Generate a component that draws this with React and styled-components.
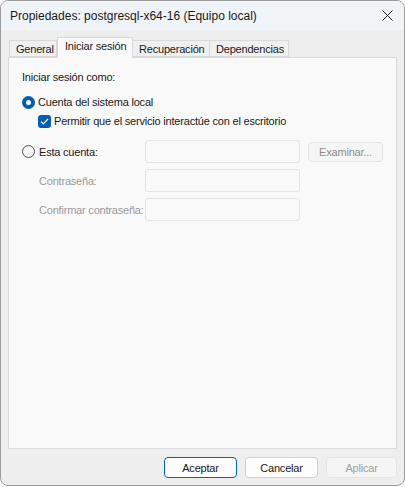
import React from 'react';
import styled, { createGlobalStyle } from 'styled-components';

const GlobalStyle = createGlobalStyle`
  html, body {
    margin: 0;
    padding: 0;
    background: #ffffff;
  }
  body {
    font-family: 'Liberation Sans', Arial, sans-serif;
    font-size: 11px;
    letter-spacing: -0.2px;
    color: #1a1a1a;
  }
`;

const Window = styled.div`
  box-sizing: border-box;
  width: 405px;
  height: 486px;
  display: flex;
  flex-direction: column;
  background: #eeeeee;
  border: 1px solid #9c9c9c;
  border-radius: 8px;
  overflow: hidden;
`;

const TitleBar = styled.div`
  height: 29px;
  flex: none;
  display: flex;
  align-items: center;
  justify-content: space-between;
  padding: 0 8px 0 9px;
  background: #eff4f9;
  font-size: 12px;
  letter-spacing: 0;
  color: #1a1a1a;
`;

const CloseButton = styled.button`
  width: 30px;
  height: 29px;
  border: 0;
  padding: 0;
  background: transparent;
  display: flex;
  align-items: center;
  justify-content: center;
  margin-right: -6px;
`;

const TabStrip = styled.div`
  display: flex;
  align-items: flex-end;
  margin: 7px 0 0 8px;
  height: 20px;
  position: relative;
  z-index: 1;
`;

const Tab = styled.div`
  box-sizing: border-box;
  height: ${p => (p.$active ? '21px' : '17px')};
  margin-bottom: ${p => (p.$active ? '-1px' : '0')};
  padding: ${p => (p.$active ? '2px 0 0 7px' : '2px 0 0 6px')};
  border: 1px solid #d9d9d9;
  border-bottom: ${p => (p.$active ? '0' : '1px solid #d9d9d9')};
  border-left: ${p => (p.$first || p.$active ? '1px solid #d9d9d9' : '0')};
  background: ${p => (p.$active ? '#f9f9f9' : '#f0f0f0')};
  width: ${p => p.$w}px;
  white-space: nowrap;
  color: #1a1a1a;
  line-height: 13px;
`;

const Panel = styled.div`
  box-sizing: border-box;
  margin: 0 7px 0 7px;
  height: 392px;
  border: 1px solid #dadada;
  background: #f9f9f9;
  padding: 11px 13px 0 13px;
  display: flex;
  flex-direction: column;
`;

const Line = styled.div`
  display: flex;
  align-items: center;
  height: 16px;
  margin-top: ${p => p.$mt || 0}px;
  margin-left: ${p => p.$ml || 0}px;
  color: ${p => (p.$disabled ? '#9a9a9a' : '#1a1a1a')};
  white-space: nowrap;
`;

const Radio = styled.span`
  box-sizing: border-box;
  width: 13px;
  height: 13px;
  border-radius: 50%;
  flex: none;
  margin-right: ${p => p.$gap || 3}px;
  background: ${p => (p.$checked ? '#005fb8' : '#f5f5f5')};
  border: ${p => (p.$checked ? '0' : '1px solid #4f4f4f')};
  display: flex;
  align-items: center;
  justify-content: center;

  &::after {
    content: '';
    display: ${p => (p.$checked ? 'block' : 'none')};
    width: 5px;
    height: 5px;
    border-radius: 50%;
    background: #ffffff;
  }
`;

const Check = styled.span`
  width: 13px;
  height: 13px;
  border-radius: 3px;
  background: #005fb8;
  flex: none;
  margin-right: 3px;
  display: flex;
  align-items: center;
  justify-content: center;
`;

const AccountGrid = styled.div`
  display: grid;
  grid-template-columns: 115px 155px 75px;
  grid-auto-rows: 23px;
  column-gap: 8px;
  row-gap: 6px;
  margin-top: 11px;
  align-items: center;
`;

const Field = styled.div`
  box-sizing: border-box;
  height: 23px;
  border: 1px solid #e3e3e3;
  border-radius: 3px;
  background: #f9f9f9;
`;

const SmallButton = styled.button`
  box-sizing: border-box;
  height: 20px;
  width: 75px;
  border: 1px solid #e3e3e3;
  border-radius: 4px;
  background: #f5f5f5;
  color: #8d8d8d;
  font: inherit;
  letter-spacing: inherit;
  padding: 0;
`;

const Footer = styled.div`
  display: flex;
  justify-content: flex-end;
  gap: 8px;
  padding: 8px 7px 0 0;
`;

const DialogButton = styled.button`
  box-sizing: border-box;
  width: ${p => p.$w || 73}px;
  height: 21px;
  padding: 0;
  font: inherit;
  letter-spacing: inherit;
  border-radius: 4px;
  background: ${p => (p.$disabled ? '#f5f5f5' : '#fdfdfd')};
  color: ${p => (p.$disabled ? '#a0a0a0' : '#1a1a1a')};
  border: 1px solid ${p => (p.$default ? '#0067c0' : p.$disabled ? '#e5e5e5' : '#d0d0d0')};
`;

const tabs = [
  { label: 'General', w: 48 },
  { label: 'Iniciar sesión', w: 76, active: true },
  { label: 'Recuperación', w: 77 },
  { label: 'Dependencias', w: 79 },
];

export default function App() {
  return (
    <>
      <GlobalStyle />
      <Window>
        <TitleBar>
          <span>Propiedades: postgresql-x64-16 (Equipo local)</span>
          <CloseButton aria-label="Cerrar">
            <svg width="11" height="11" viewBox="0 0 11 11">
              <path d="M0.5 0.5 L10.5 10.5 M10.5 0.5 L0.5 10.5" stroke="#1a1a1a" strokeWidth="1" fill="none" />
            </svg>
          </CloseButton>
        </TitleBar>

        <TabStrip>
          {tabs.map((t, i) => (
            <Tab key={t.label} $active={t.active} $first={i === 0} $w={t.w}>
              {t.label}
            </Tab>
          ))}
        </TabStrip>

        <Panel>
          <Line>Iniciar sesión como:</Line>
          <Line $mt={9}>
            <Radio $checked />
            Cuenta del sistema local
          </Line>
          <Line $mt={3} $ml={16}>
            <Check>
              <svg width="9" height="7" viewBox="0 0 9 7">
                <path d="M1 3.6 L3.3 5.8 L8 1" stroke="#ffffff" strokeWidth="1.2" fill="none" />
              </svg>
            </Check>
            Permitir que el servicio interactúe con el escritorio
          </Line>

          <AccountGrid>
            <Line>
              <Radio $gap={4} />
              Esta cuenta:
            </Line>
            <Field />
            <SmallButton disabled>Examinar...</SmallButton>

            <Line $ml={17} $disabled>Contraseña:</Line>
            <Field />
            <span />

            <Line $ml={17} $disabled>Confirmar contraseña:</Line>
            <Field />
            <span />
          </AccountGrid>
        </Panel>

        <Footer>
          <DialogButton $default>Aceptar</DialogButton>
          <DialogButton>Cancelar</DialogButton>
          <DialogButton $w={71} $disabled>Aplicar</DialogButton>
        </Footer>
      </Window>
    </>
  );
}
